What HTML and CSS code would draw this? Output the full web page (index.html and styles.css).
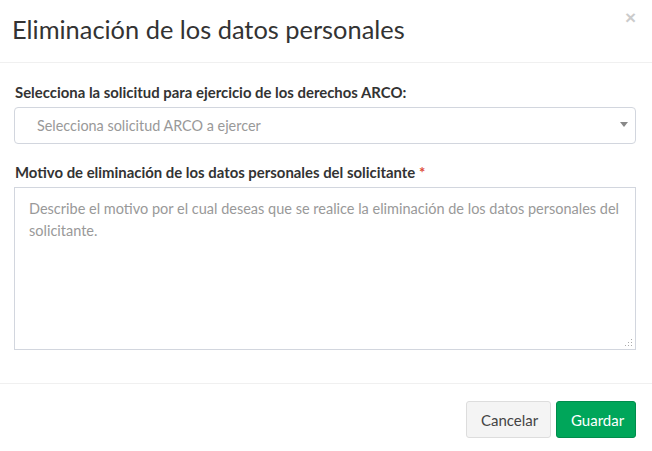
FILE: index.html
```html
<!DOCTYPE html>
<html lang="es">
<head>
<meta charset="utf-8">
<title>Eliminación de los datos personales</title>
<link rel="stylesheet" href="styles.css">
</head>
<body>
<div class="modal">
  <div class="modal-header">
    <h4 class="modal-title">Eliminación de los datos personales</h4>
    <button class="close" type="button">×</button>
  </div>
  <div class="modal-body">
    <div class="form-group">
      <label class="label">Selecciona la solicitud para ejercicio de los derechos ARCO:</label>
      <div class="select">
        <span class="select-placeholder">Selecciona solicitud ARCO a ejercer</span>
        <span class="select-arrow"></span>
      </div>
    </div>
    <div class="form-group">
      <label class="label">Motivo de eliminación de los datos personales del solicitante <span class="req">*</span></label>
      <div class="textarea-wrap">
        <textarea class="textarea" placeholder="Describe el motivo por el cual deseas que se realice la eliminación de los datos personales del solicitante."></textarea>
        <svg class="grip" width="8" height="8" viewBox="0 0 8 8">
          <rect x="6" y="0" width="1" height="1" fill="#aaa"/>
          <rect x="6" y="3" width="1" height="1" fill="#aaa"/>
          <rect x="6" y="6" width="1" height="1" fill="#aaa"/>
          <rect x="3" y="3" width="1" height="1" fill="#aaa"/>
          <rect x="3" y="6" width="1" height="1" fill="#aaa"/>
          <rect x="0" y="6" width="1" height="1" fill="#aaa"/>
        </svg>
      </div>
    </div>
  </div>
  <div class="modal-footer">
    <button class="btn btn-default" type="button">Cancelar</button>
    <button class="btn btn-success" type="button">Guardar</button>
  </div>
</div>
</body>
</html>
```

FILE: styles.css
```css
* { box-sizing: border-box; }
html, body { margin: 0; background: #fff; }
body {
  font-family: "Source Sans Pro", Lato, "Liberation Sans", sans-serif;
  font-size: 14px;
  color: #333;
}
.modal { width: 652px; height: 451px; background: #fff; }
.modal-header {
  display: flex;
  justify-content: space-between;
  align-items: flex-start;
  height: 63px;
  padding: 14px 16px 0 12px;
  border-bottom: 1px solid #f0f0f0;
}
.modal-title {
  margin: 0;
  font-size: 25.4px;
  font-weight: 400;
  line-height: 30px;
  color: #333;
}
.close {
  border: 0;
  background: none;
  padding: 0;
  margin-top: -6px;
  font-family: "Liberation Sans", sans-serif;
  font-size: 19px;
  font-weight: bold;
  color: #000;
  opacity: 0.2;
  line-height: 20px;
}
.modal-body { padding: 19px 16px 0 14px; }
.form-group { margin-bottom: 18px; }
.form-group:last-child { margin-bottom: 0; }
.label {
  display: block;
  font-weight: 700;
  font-size: 14.9px;
  line-height: 20px;
  color: #333;
  margin: 0 0 5px 1px;
}
.req { color: #dd4b39; }
.select {
  position: relative;
  height: 37px;
  border: 1px solid #d2d6de;
  border-radius: 4px;
  display: flex;
  align-items: center;
  padding-left: 22px;
}
.select-placeholder { color: #999; font-size: 14.4px; }
.select-arrow {
  position: absolute;
  right: 7px;
  top: 14px;
  width: 0; height: 0;
  border-left: 4px solid transparent;
  border-right: 4px solid transparent;
  border-top: 5px solid #888;
}
.textarea-wrap { position: relative; }
.textarea {
  display: block;
  width: 100%;
  height: 163px;
  border: 1px solid #d2d6de;
  border-radius: 0;
  padding: 10px 14px 6px;
  font-family: inherit;
  font-size: 14.5px;
  line-height: 22px;
  color: #555;
  resize: none;
}
.textarea::placeholder { color: #999; }
.grip {
  position: absolute;
  right: 3px;
  bottom: 3px;
}
.modal-footer {
  margin-top: 33px;
  border-top: 1px solid #f0f0f0;
  padding: 17px 16px 0 15px;
  display: flex;
  justify-content: flex-end;
  gap: 5px;
}
.btn {
  height: 37px;
  border-radius: 3px;
  font-family: inherit;
  font-size: 15px;
  padding: 0 14px;
  border: 1px solid transparent;
}
.btn-default { background: #f4f4f4; border-color: #ddd; color: #444; width: 85px; }
.btn-success { background: #00a65a; border-color: #008d4c; color: #fff; width: 80px; }
```
